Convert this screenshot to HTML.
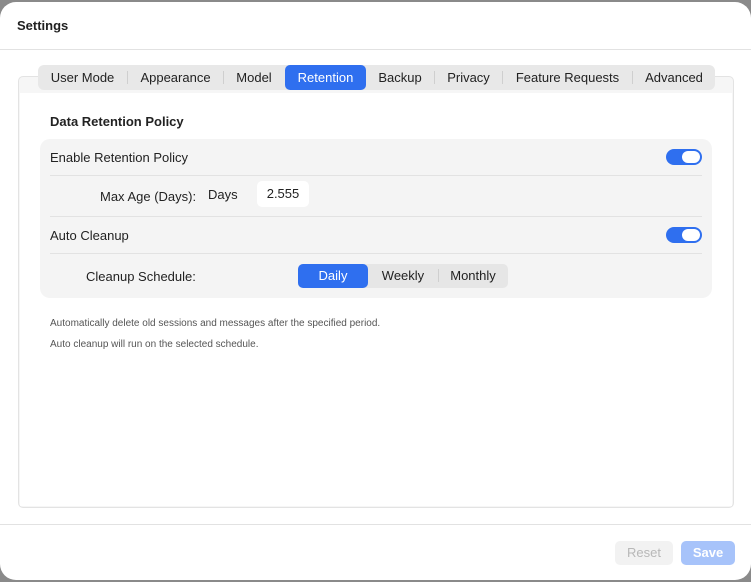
<!DOCTYPE html>
<html><head><style>
*{box-sizing:border-box;margin:0;padding:0}
body{width:751px;height:582px;background:#8a8a8a;font-family:"Liberation Sans",sans-serif;color:#222;position:relative;overflow:hidden}
.win{position:absolute;left:0;top:2px;width:751px;height:578px;background:#fff;border-radius:16px;overflow:hidden}
.abs{position:absolute}
.title{left:17px;top:16px;font-size:13px;font-weight:bold;color:#222}
.hl{left:0;width:751px;height:1px;background:#e2e2e2}
.box{left:18px;top:74px;width:716px;height:432px;border:1px solid #e3e3e3;border-radius:5px;background:#f6f6f6}
.inner{position:absolute;left:1px;top:16px;right:1px;bottom:1px;background:#fff}
.tabs{left:38px;top:63px;width:677px;height:25px;background:#e8e8e8;border-radius:6px;font-size:13px;color:#222}
.tab{position:absolute;top:0;height:25px;line-height:25px;text-align:center}
.sep{position:absolute;top:6px;width:1px;height:13px;background:#cfcfcf}
.card{left:40px;top:137px;width:672px;height:159px;background:#f4f4f4;border-radius:10px}
.t13{font-size:13px;color:#222}
.line{height:1px;background:#e2e2e2;left:50px;width:652px}
.tog{width:36px;height:16px;background:#2f6fef;border-radius:8px}
.tog:after{content:"";position:absolute;right:2px;top:2px;width:18px;height:12px;border-radius:6px;background:#fff}
.small{font-size:10px;color:#555}
</style></head><body>
<div class="win">
<div class="abs title">Settings</div>
<div class="abs hl" style="top:47px"></div>
<div class="abs box"><div class="inner"></div></div>
<div class="abs tabs">
<div class="tab" style="left:0;width:89px">User Mode</div>
<div class="sep" style="left:89px"></div>
<div class="tab" style="left:90px;width:95px">Appearance</div>
<div class="sep" style="left:185px"></div>
<div class="tab" style="left:186px;width:60px">Model</div>
<div class="tab" style="left:247px;width:81px;background:#2f6fef;color:#fff;border-radius:5px">Retention</div>
<div class="tab" style="left:328px;width:68px">Backup</div>
<div class="sep" style="left:396px"></div>
<div class="tab" style="left:397px;width:67px">Privacy</div>
<div class="sep" style="left:464px"></div>
<div class="tab" style="left:465px;width:129px">Feature Requests</div>
<div class="sep" style="left:594px"></div>
<div class="tab" style="left:595px;width:82px">Advanced</div>
</div>
<div class="abs t13" style="left:50px;top:112px;font-weight:bold">Data Retention Policy</div>
<div class="abs card"></div>
<div class="abs t13" style="left:50px;top:148px">Enable Retention Policy</div>
<div class="abs tog" style="left:666px;top:147px"></div>
<div class="abs line" style="top:173px"></div>
<div class="abs t13" style="left:100px;top:187px">Max Age (Days):</div>
<div class="abs t13" style="left:208px;top:185px">Days</div>
<div class="abs t13" style="left:257px;top:179px;width:52px;height:26px;background:#fff;border-radius:5px;line-height:26px;text-align:center">2.555</div>
<div class="abs line" style="top:214px"></div>
<div class="abs t13" style="left:50px;top:226px">Auto Cleanup</div>
<div class="abs tog" style="left:666px;top:225px"></div>
<div class="abs line" style="top:251px"></div>
<div class="abs t13" style="left:86px;top:267px">Cleanup Schedule:</div>
<div class="abs t13" style="left:298px;top:262px;width:210px;height:24px;background:#e6e6e6;border-radius:5px">
<div class="tab" style="left:0;width:70px;height:24px;line-height:24px;background:#2f6fef;color:#fff;border-radius:5px">Daily</div>
<div class="tab" style="left:70px;width:70px;height:24px;line-height:24px">Weekly</div>
<div class="sep" style="left:140px;top:5px"></div>
<div class="tab" style="left:140px;width:70px;height:24px;line-height:24px">Monthly</div>
</div>
<div class="abs small" style="left:50px;top:316px">Automatically delete old sessions and messages after the specified period.</div>
<div class="abs small" style="left:50px;top:337px">Auto cleanup will run on the selected schedule.</div>
<div class="abs hl" style="top:522px"></div>
<div class="abs" style="left:615px;top:539px;width:58px;height:24px;background:#f2f2f2;border-radius:5px;color:#b8b8b8;font-size:13px;line-height:24px;text-align:center">Reset</div>
<div class="abs" style="left:681px;top:539px;width:54px;height:24px;background:#a7c3fa;border-radius:5px;color:#fff;font-size:13px;font-weight:bold;line-height:24px;text-align:center">Save</div>
</div>
</body></html>
